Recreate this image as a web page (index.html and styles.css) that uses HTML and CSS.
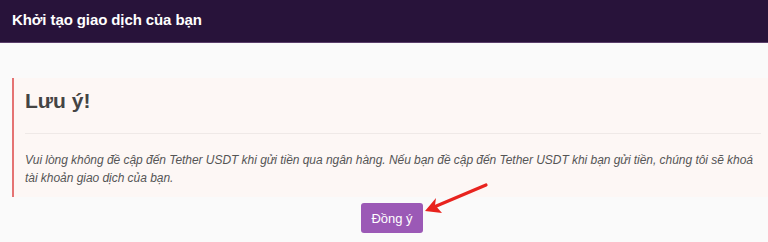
FILE: index.html
```html
<!DOCTYPE html>
<html lang="vi">
<head>
<meta charset="utf-8">
<link rel="stylesheet" href="styles.css">
</head>
<body>
<header class="topbar">
  <h1 class="topbar-title">Khởi tạo giao dịch của bạn</h1>
</header>
<main class="content">
  <section class="notice">
    <h2 class="notice-title">Lưu ý!</h2>
    <hr class="notice-rule">
    <p class="notice-text">Vui lòng không đề cập đến Tether USDT khi gửi tiền qua ngân hàng. Nếu bạn đề cập đến Tether USDT khi bạn gửi tiền, chúng tôi sẽ khoá tài khoản giao dịch của bạn.</p>
  </section>
  <div class="actions">
    <button class="btn-agree" type="button">Đồng ý</button>
    <svg class="pointer-arrow" width="70" height="40" viewBox="0 0 70 40">
      <line x1="66" y1="4" x2="14" y2="26" stroke="#e8231e" stroke-width="3.2" stroke-linecap="round"/>
      <path d="M5 30 L16 17 L15 24 L22 32 Z" fill="#e8231e"/>
    </svg>
  </div>
</main>
</body>
</html>
```
FILE: styles.css
```css
html, body {
  margin: 0;
  padding: 0;
}
body {
  background: #fafafa;
  font-family: "Liberation Sans", Arial, sans-serif;
  width: 768px;
  height: 242px;
  overflow: hidden;
}
.topbar {
  background: #28133a;
  height: 42px;
  border-bottom: 1px solid #5b3f6b;
  display: flex;
  align-items: center;
  padding-left: 12px;
}
.topbar-title {
  margin: 0;
  color: #ffffff;
  font-size: 15px;
  font-weight: bold;
  line-height: 18px;
  position: relative;
  top: -1px;
  letter-spacing: -0.1px;
}
.content {
  padding: 35px 0 0 12px;
}
.notice {
  background: #fdf7f5;
  border-left: 2px solid #e57373;
  padding: 8px 7px 10px 11px;
}
.notice-title {
  margin: 0;
  font-size: 21px;
  font-weight: bold;
  color: #444444;
  line-height: 30px;
}
.notice-rule {
  border: 0;
  border-top: 1px solid #efe9e7;
  margin: 17px 0 17px 0;
}
.notice-text {
  margin: 0;
  font-style: italic;
  font-size: 12px;
  line-height: 18px;
  letter-spacing: -0.04px;
  color: #555555;
}
.actions {
  position: relative;
  display: flex;
  justify-content: center;
  padding-top: 6px;
}
.btn-agree {
  background: #9b59b6;
  color: #ffffff;
  border: 0;
  border-radius: 3px;
  height: 30px;
  width: 62px;
  margin-left: 4px;
  font-family: "Liberation Sans", Arial, sans-serif;
  font-size: 13px;
  padding: 0;
  cursor: pointer;
}
.pointer-arrow {
  position: absolute;
  left: 408px;
  top: -16px;
}
```
